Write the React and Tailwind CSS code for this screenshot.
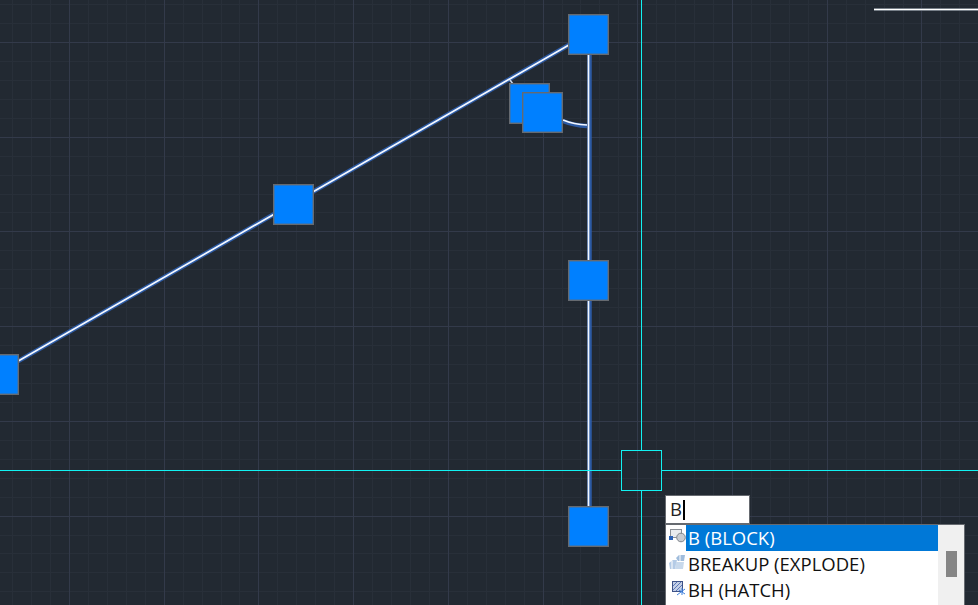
const STEP = 94.72;
const MINOR = STEP / 5;

// Grid offsets taken from the first major line at 69,42
const minorX = Array.from({ length: 56 }, (_, i) => 69 - MINOR * 4 + i * MINOR);
const minorY = Array.from({ length: 34 }, (_, i) => 42 - MINOR * 2 + i * MINOR);
const majorX = Array.from({ length: 10 }, (_, i) => 69 + i * STEP);
const majorY = Array.from({ length: 6 }, (_, i) => 42 + i * STEP);

const grips = [
  [-22, 354],
  [273, 184],
  [509, 83],
  [522, 92],
  [568, 14],
  [568, 260],
  [568, 506],
];

const Grid = () => (
  <g shapeRendering="crispEdges">
    {minorX.map((x) => (
      <line key={`mx${x}`} x1={Math.round(x) + 0.5} y1="0" x2={Math.round(x) + 0.5} y2="605" stroke="#282f39" />
    ))}
    {minorY.map((y) => (
      <line key={`my${y}`} x1="0" y1={Math.round(y) + 0.5} x2="978" y2={Math.round(y) + 0.5} stroke="#282f39" />
    ))}
    {majorX.map((x) => (
      <line key={`Mx${x}`} x1={Math.round(x) + 0.5} y1="0" x2={Math.round(x) + 0.5} y2="605" stroke="#333a4a" />
    ))}
    {majorY.map((y) => (
      <line key={`My${y}`} x1="0" y1={Math.round(y) + 0.5} x2="978" y2={Math.round(y) + 0.5} stroke="#333a4a" />
    ))}
  </g>
);

// Highlighted geometry: blue halo under a thin white stroke
const Geometry = ({ d, halo }) => (
  <>
    <path d={halo || d} fill="none" stroke="#2d5fb0" strokeWidth="4.5" opacity="0.9" />
    <path d={d} fill="none" stroke="#f4f8ff" strokeWidth="1.7" />
  </>
);

const Drawing = () => (
  <svg className="absolute inset-0" width="978" height="605" viewBox="0 0 978 605">
    <Grid />

    <path d="M874 9.5H978" stroke="#777f88" strokeWidth="3" />
    <path d="M874 9.5H978" stroke="#ffffff" strokeWidth="1.2" />

    <Geometry d="M0 371.5L588 34" />
    <Geometry d="M588.5 34V526" halo="M589.5 34V526" />
    <Geometry d="M563 120Q574 124.5 587 125" halo="M563 121Q574 125.5 587 126" />
    <path d="M510 80L513 84" stroke="#c8d4ea" strokeWidth="1.5" />

    {/* crosshair */}
    <g shapeRendering="crispEdges" stroke="#12f2f2">
      <line x1="641.5" y1="0" x2="641.5" y2="450" />
      <line x1="641.5" y1="490" x2="641.5" y2="605" />
      <line x1="0" y1="470.5" x2="621" y2="470.5" />
      <line x1="662" y1="470.5" x2="978" y2="470.5" />
      <rect x="621.5" y="450.5" width="40" height="40" fill="none" />
    </g>

    {grips.map(([x, y]) => (
      <rect key={`${x}-${y}`} x={x + 0.7} y={y + 0.7} width="39.6" height="39.6" fill="#0080ff" stroke="#666a70" strokeWidth="1.4" />
    ))}
  </svg>
);

const BlockIcon = () => (
  <svg width="18" height="18" viewBox="0 0 18 18">
    <rect x="2.5" y="2.5" width="11" height="8" fill="#e9ebee" stroke="#8a8f96" />
    <rect x="1" y="9" width="4" height="4" fill="#2c64b8" />
    <circle cx="13" cy="10.5" r="4.3" fill="#c9ccd1" stroke="#80858c" />
  </svg>
);

const ExplodeIcon = () => (
  <svg width="18" height="18" viewBox="0 0 18 18">
    <path d="M1 10L5 7H9L7 16H2Z" fill="#b4cbe6" />
    <path d="M8 5L11 2H17L16 8H10Z" fill="#9fbcdc" />
    <path d="M8 9H16L15 16H7Z" fill="#c8d9ec" />
    <path d="M4 8V16M12 2V8" stroke="#ffffff" />
  </svg>
);

const HatchIcon = () => (
  <svg width="18" height="18" viewBox="0 0 18 18">
    <rect x="4.5" y="2.5" width="10" height="10" fill="#c3cfe6" stroke="#3d5288" />
    <path d="M5 7L9 3M5 11L13 3M8 12L14 6" stroke="#5c78b8" />
    <path d="M9 16L17 10M14 9V16M11 11L17 15" stroke="#3f80dc" />
  </svg>
);

const commands = [
  { label: "B (BLOCK)", Icon: BlockIcon, active: true },
  { label: "BREAKUP (EXPLODE)", Icon: ExplodeIcon },
  { label: "BH (HATCH)", Icon: HatchIcon },
];

const CommandInput = () => (
  <div className="absolute left-[665px] top-[495px] flex h-[29px] w-[85px] items-center border border-[#666a70] bg-white pl-[4px] text-[18.5px] leading-none text-[#222]">
    <span>B</span>
    <span className="ml-[1px] h-[20px] w-[2px] bg-black" />
  </div>
);

const Suggestions = () => (
  <div className="absolute left-[665px] top-[524px] flex h-[90px] w-[300px] border border-[#666a70] bg-white text-[18.5px] leading-none text-[#111]">
    <ul className="w-[272px]">
      {commands.map(({ label, Icon, active }) => (
        <li key={label} className="flex h-[26px] items-center">
          <span className="flex w-[20px] justify-center pb-[4px] pl-[1px]">
            <Icon />
          </span>
          <span className={`flex h-full flex-1 items-center pl-[2px] ${active ? "bg-[#0078d7] text-white" : ""}`}>
            {label}
          </span>
        </li>
      ))}
    </ul>
    <div className="w-[26px] bg-[#f0f0f0] pl-[8px] pt-[26px]">
      <div className="h-[26px] w-[11px] bg-[#858585]" />
    </div>
  </div>
);

export default function App() {
  return (
    <div
      className="relative h-[605px] w-[978px] overflow-hidden bg-[#222932]"
      style={{ fontFamily: '"Open Sans", "Noto Sans", sans-serif' }}
    >
      <Drawing />
      <CommandInput />
      <Suggestions />
    </div>
  );
}
